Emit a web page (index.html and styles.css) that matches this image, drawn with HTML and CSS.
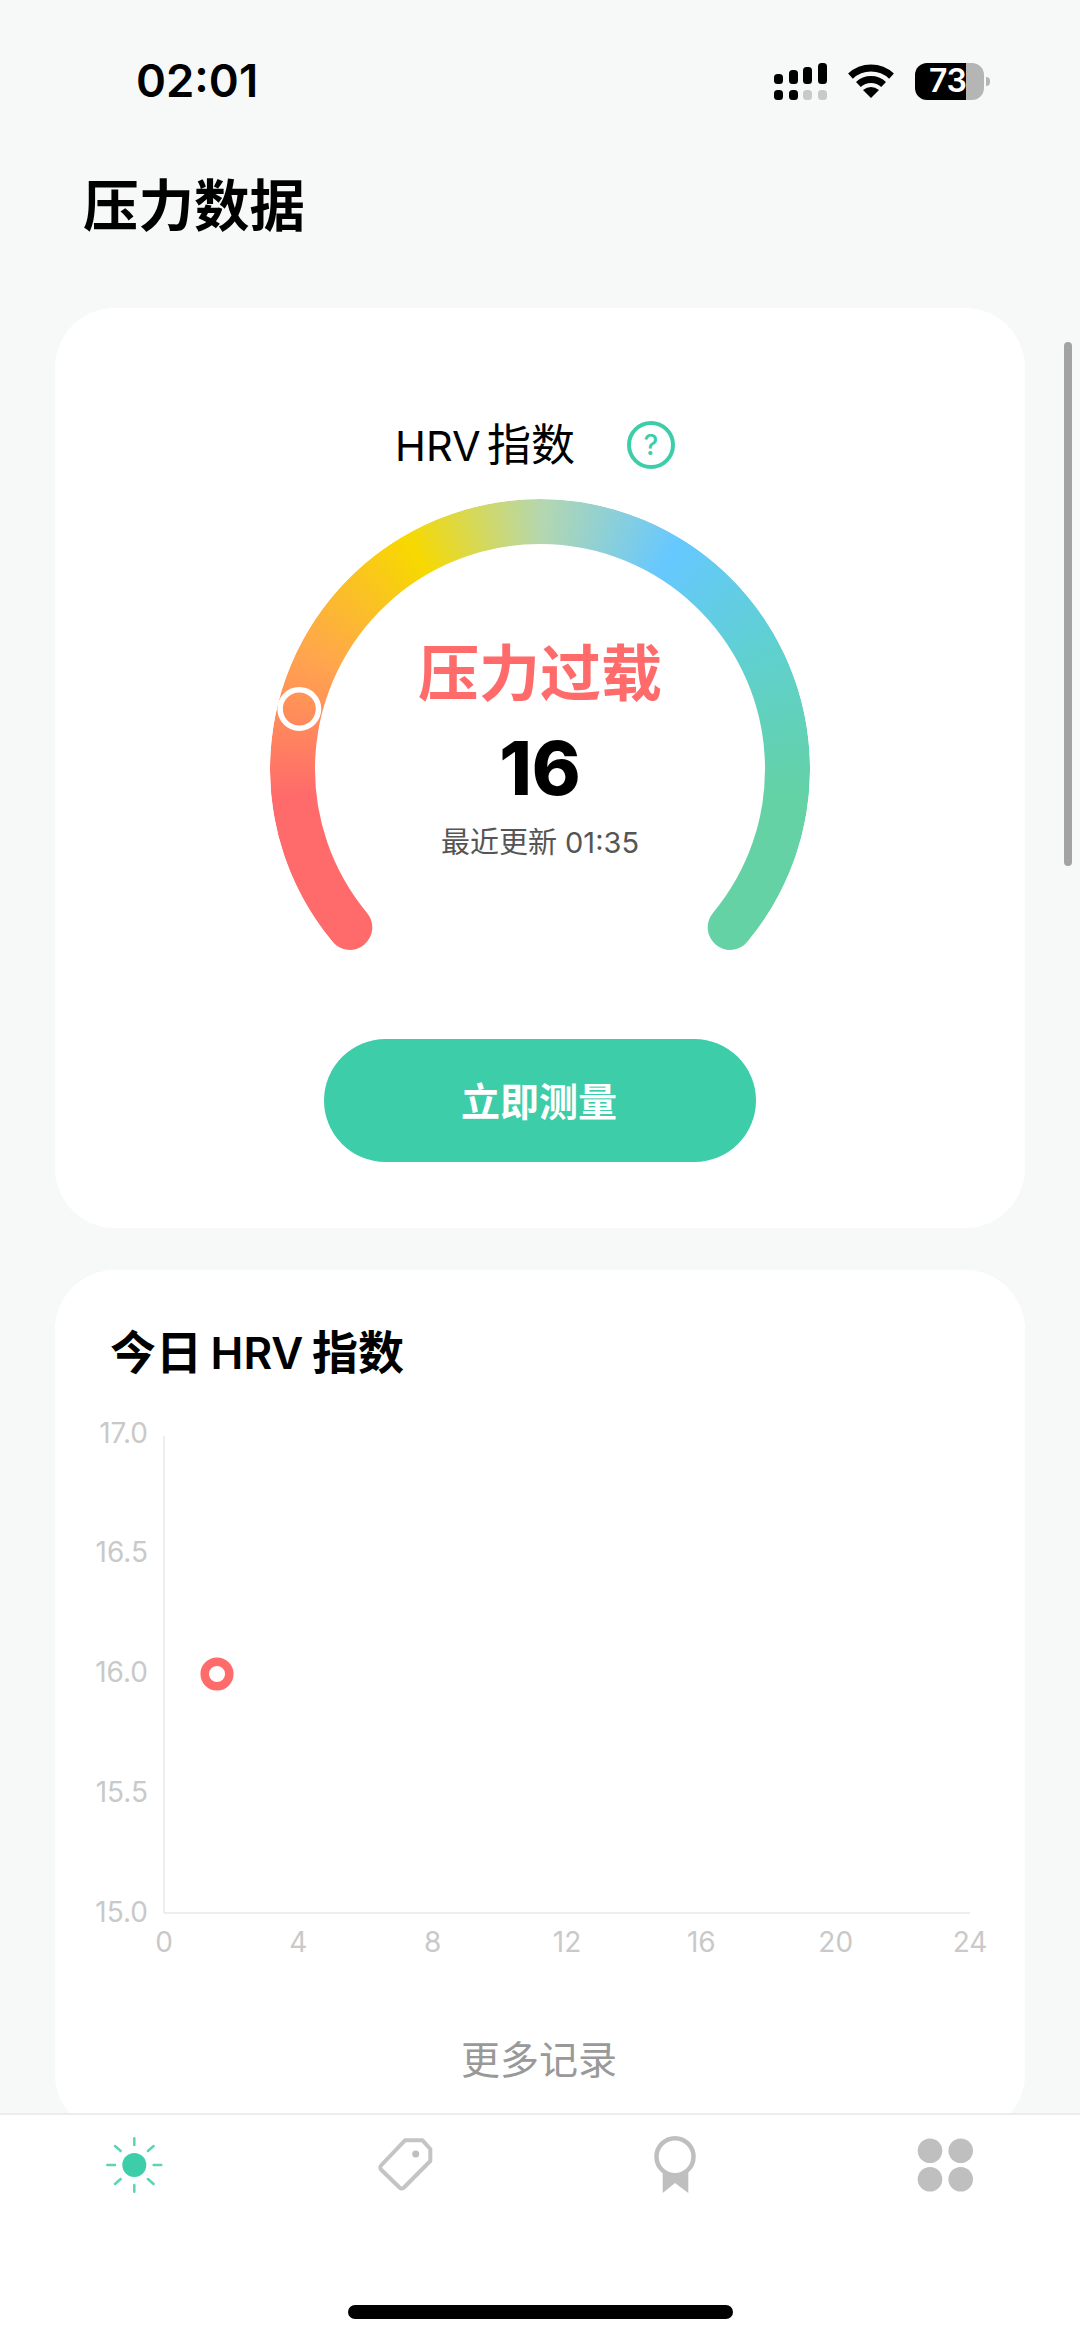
FILE: index.html
```html
<!DOCTYPE html>
<html lang="zh-CN">
<head>
<meta charset="utf-8">
<title>压力数据</title>
<link rel="stylesheet" href="styles.css">
</head>
<body>
<div class="app">
  <header class="status">
    <span class="time">02:01</span>
    <div class="status-icons">
      <svg class="signal" width="53" height="37" viewBox="0 0 53 37">
        <rect x="0" y="11" width="9" height="10" rx="3.5"/>
        <rect x="15" y="7" width="9" height="14" rx="3.5"/>
        <rect x="29" y="4" width="9" height="17" rx="3.5"/>
        <rect x="44" y="0" width="9" height="21" rx="3.5"/>
        <rect x="0" y="27" width="9" height="10" rx="3.5"/>
        <rect x="15" y="27" width="9" height="10" rx="3.5"/>
        <rect class="dim" x="29" y="27" width="9" height="10" rx="3.5"/>
        <rect class="dim" x="44" y="27" width="9" height="10" rx="3.5"/>
      </svg>
      <svg class="wifi" width="46" height="34" viewBox="0 0 46 34">
        <path class="wifi-arc" d="M2.5 12.1 A30 30 0 0 1 43.5 12.1"/>
        <path class="wifi-arc" d="M10.4 20.5 A18.5 18.5 0 0 1 35.6 20.5"/>
        <path d="M23 34 L15 26 Q23 20 31 26 Z"/>
      </svg>
      <div class="battery">
        <div class="battery-body">
          <span class="battery-text">73</span>
        </div>
        <div class="battery-nub"></div>
      </div>
    </div>
  </header>

  <h1 class="page-title">压力数据</h1>

  <section class="card card-gauge">
    <div class="gauge-head">
      <span class="gauge-label"><span class="latin-label">HRV</span> 指数</span>
      <svg class="help" width="48" height="48" viewBox="0 0 48 48">
        <circle class="help-ring" cx="24" cy="24" r="22"/>
        <text class="help-mark" x="24" y="33.5">?</text>
      </svg>
    </div>
    <div class="gauge">
      <svg class="gauge-svg" width="540" height="452" viewBox="0 0 540 452">
        <defs>
          <mask id="arc" maskUnits="userSpaceOnUse" x="0" y="0" width="540" height="452">
            <path class="arc-path" d="M79.8 428.4 A247.5 247.5 0 1 1 460.2 428.4"/>
          </mask>
        </defs>
        <foreignObject x="0" y="0" width="540" height="452" mask="url(#arc)">
          <div xmlns="http://www.w3.org/1999/xhtml" class="conic"></div>
        </foreignObject>
        <circle class="handle" cx="29.3" cy="210" r="19.2"/>
      </svg>
      <div class="gauge-text">
        <div class="state">压力过载</div>
        <div class="score">16</div>
        <div class="updated">最近更新 01:35</div>
      </div>
    </div>
    <button class="measure" type="button">立即测量</button>
  </section>

  <section class="card card-chart">
    <h2 class="chart-title">今日 <span class="latin-title">HRV</span> 指数</h2>
    <svg class="chart" width="970" height="560" viewBox="0 0 970 560">
      <line class="axis" x1="109" y1="25" x2="109" y2="502"/>
      <line class="axis" x1="109" y1="502" x2="915" y2="502"/>
      <g class="y-labels">
        <text x="93" y="22">17.0</text>
        <text x="93" y="141">16.5</text>
        <text x="93" y="261">16.0</text>
        <text x="93" y="381">15.5</text>
        <text x="93" y="501">15.0</text>
      </g>
      <g class="x-labels">
        <text x="109" y="531">0</text>
        <text x="243.3" y="531">4</text>
        <text x="377.7" y="531">8</text>
        <text x="512" y="531">12</text>
        <text x="646.3" y="531">16</text>
        <text x="780.7" y="531">20</text>
        <text x="915" y="531">24</text>
      </g>
      <circle class="point" cx="162" cy="263" r="12.3"/>
    </svg>
    <div class="more">更多记录</div>
  </section>

  <div class="scrollbar"></div>

  <nav class="tabbar">
    <div class="tab">
      <svg class="tab-icon" width="60" height="60" viewBox="0 0 60 60">
        <circle class="sun-core" cx="29.3" cy="30" r="12"/>
        <g class="sun-rays">
          <path d="M29.3 3.3V10M29.3 50V56.7M2.3 30H10M48.6 30H56.3M10 11L15.7 16M48.6 11L42.9 16M10 49L15.7 44M48.6 49L42.9 44"/>
        </g>
      </svg>
    </div>
    <div class="tab">
      <svg class="tab-icon" width="60" height="60" viewBox="0 0 60 60">
        <path class="tag" d="M30 5.3H47.5L55.3 14V26L29 52.5Q26.7 54.5 24.5 52.5L6.5 35Q4 32.7 6.5 30Z"/>
        <circle class="solid" cx="40.7" cy="19" r="3.5"/>
      </svg>
    </div>
    <div class="tab">
      <svg class="tab-icon" width="60" height="60" viewBox="0 0 60 60">
        <circle class="medal-ring" cx="30" cy="21.7" r="18.5"/>
        <path class="solid" d="M17.7 36Q30 44 43.3 36V58L30 48L17.7 58Z"/>
      </svg>
    </div>
    <div class="tab">
      <svg class="tab-icon" width="60" height="60" viewBox="0 0 60 60">
        <circle class="solid" cx="15" cy="15.7" r="12.3"/>
        <circle class="solid" cx="45.7" cy="15.7" r="12.3"/>
        <circle class="solid" cx="15" cy="44.3" r="12.3"/>
        <circle class="solid" cx="45.7" cy="44.3" r="12.3"/>
      </svg>
    </div>
    <div class="home-indicator"></div>
  </nav>
</div>
</body>
</html>
```

FILE: styles.css
```css
* {
  box-sizing: border-box;
}

html,
body {
  margin: 0;
  padding: 0;
}

body {
  background: #f7f9f8;
  font-family: Inter, "Noto Sans CJK SC", "Noto Sans", sans-serif;
  color: #000;
}

.app {
  position: relative;
  width: 1080px;
  height: 2341px;
  overflow: hidden;
  background: #f7f9f8;
}

/* status bar */
.status {
  height: 162px;
  padding: 0 90px 0 136px;
  display: flex;
  align-items: center;
  justify-content: space-between;
}

.time {
  font-size: 45.5px;
  font-weight: 600;
  line-height: 1;
}

.status-icons {
  display: flex;
  align-items: center;
  gap: 21px;
}

.signal,
.wifi {
  display: block;
  fill: #000;
}

.signal .dim {
  fill: #c9c9c9;
}

.wifi-arc {
  fill: none;
  stroke: #000;
  stroke-width: 7;
}

.battery {
  display: flex;
  align-items: center;
  gap: 2px;
}

.battery-body {
  width: 69px;
  height: 37px;
  border-radius: 12px;
  background: linear-gradient(90deg, #000 0, #000 51px, #b5b5b5 51px, #b5b5b5 100%);
  display: flex;
  align-items: center;
  padding-left: 14px;
}

.battery-text {
  color: #fff;
  font-size: 32px;
  font-weight: 600;
  line-height: 1;
  letter-spacing: -0.5px;
}

.battery-nub {
  width: 4px;
  height: 9px;
  border-radius: 0 4px 4px 0;
  background: #b5b5b5;
}

/* title */
.page-title {
  margin: 0;
  padding-left: 83px;
  font-size: 55.5px;
  font-weight: 700;
  line-height: 88px;
}

/* cards */
.card {
  width: 970px;
  margin-left: 55px;
  background: #fff;
  border-radius: 60px;
}

.card-gauge {
  margin-top: 58px;
  padding: 107px 0 66px;
  display: flex;
  flex-direction: column;
  align-items: center;
}

.gauge-head {
  height: 60px;
  display: flex;
  align-items: center;
  gap: 52px;
  padding-right: 10px;
}

.gauge-label {
  font-size: 44px;
  line-height: 60px;
  word-spacing: -6px;
}

.latin-label {
  font-size: 41.5px;
}

.help {
  display: block;
}

.help-ring {
  fill: none;
  stroke: #3ecda9;
  stroke-width: 4;
}

.help-mark {
  fill: #3ecda9;
  font-size: 28px;
  font-weight: 500;
  text-anchor: middle;
}

.gauge {
  position: relative;
  width: 540px;
  height: 452px;
  margin: 24px 0 88px;
}

.gauge-svg {
  display: block;
}

.arc-path {
  fill: none;
  stroke: #fff;
  stroke-width: 45;
  stroke-linecap: round;
}

.conic {
  width: 540px;
  height: 540px;
  border-radius: 50%;
  background: conic-gradient(
    #b5d7ae 0deg,
    #66c8ff 31deg,
    #5fd0d0 62deg,
    #64d2a4 97deg,
    #64d2a4 145deg,
    #ff6b6b 215deg,
    #ff6b6b 264deg,
    #ffa54e 296deg,
    #f7d900 330deg,
    #b5d7ae 360deg
  );
}

.handle {
  fill: none;
  stroke: #fff;
  stroke-width: 5.5;
}

.gauge-text {
  position: absolute;
  top: 0;
  left: 0;
  right: 0;
  padding-top: 135px;
  display: flex;
  flex-direction: column;
  align-items: center;
}

.state {
  color: #ff6b6b;
  font-size: 61px;
  font-weight: 700;
  line-height: 80px;
}

.score {
  margin-top: 9px;
  font-size: 74px;
  font-weight: 800;
  line-height: 90px;
}

.updated {
  margin-top: 10px;
  color: #555;
  font-size: 29px;
  line-height: 40px;
}

.measure {
  width: 432px;
  height: 123px;
  border: 0;
  padding: 0 2px 3px 0;
  border-radius: 62px;
  background: #3ecda9;
  color: #fff;
  font-family: inherit;
  font-size: 39px;
  font-weight: 700;
}

.card-chart {
  margin-top: 42px;
  padding: 51px 0 44px;
}

.chart-title {
  margin: 0;
  padding-left: 55px;
  font-size: 46px;
  font-weight: 600;
  line-height: 62px;
  word-spacing: -3px;
}

.latin-title {
  font-size: 44px;
}

.chart {
  display: block;
  margin-top: 27px;
}

.axis {
  stroke: #e9e9e9;
  stroke-width: 1.5;
}

.y-labels text,
.x-labels text {
  fill: #c9c9c9;
  font-size: 28px;
  dominant-baseline: central;
}

.y-labels text {
  text-anchor: end;
}

.x-labels text {
  text-anchor: middle;
}

.point {
  fill: #fff;
  stroke: #ff6b6b;
  stroke-width: 8.5;
}

.more {
  margin-top: 59px;
  padding-right: 2px;
  color: #999;
  font-size: 39px;
  line-height: 60px;
  text-align: center;
}

/* overlay items */
.scrollbar {
  position: absolute;
  top: 342px;
  left: 1064px;
  width: 8px;
  height: 524px;
  border-radius: 4px;
  background: #a3a3a3;
}

.tabbar {
  position: absolute;
  left: 0;
  right: 0;
  bottom: 0;
  height: 228px;
  padding-top: 20px;
  border-top: 2px solid #ececec;
  background: #fff;
  display: grid;
  grid-template-columns: repeat(4, 270px);
  align-content: start;
}

.tab {
  display: flex;
  justify-content: center;
}

.tab-icon {
  display: block;
}

.sun-core {
  fill: #3ecda9;
}

.sun-rays {
  fill: none;
  stroke: #5bd4b5;
  stroke-width: 2.5;
  stroke-linecap: round;
}

.tag {
  fill: none;
  stroke: #c4c4c4;
  stroke-width: 4;
  stroke-linejoin: round;
}

.solid {
  fill: #bfbfbf;
}

.medal-ring {
  fill: none;
  stroke: #bfbfbf;
  stroke-width: 4.5;
}

.home-indicator {
  position: absolute;
  left: 348px;
  top: 190px;
  width: 385px;
  height: 14px;
  border-radius: 7px;
  background: #000;
}
```
